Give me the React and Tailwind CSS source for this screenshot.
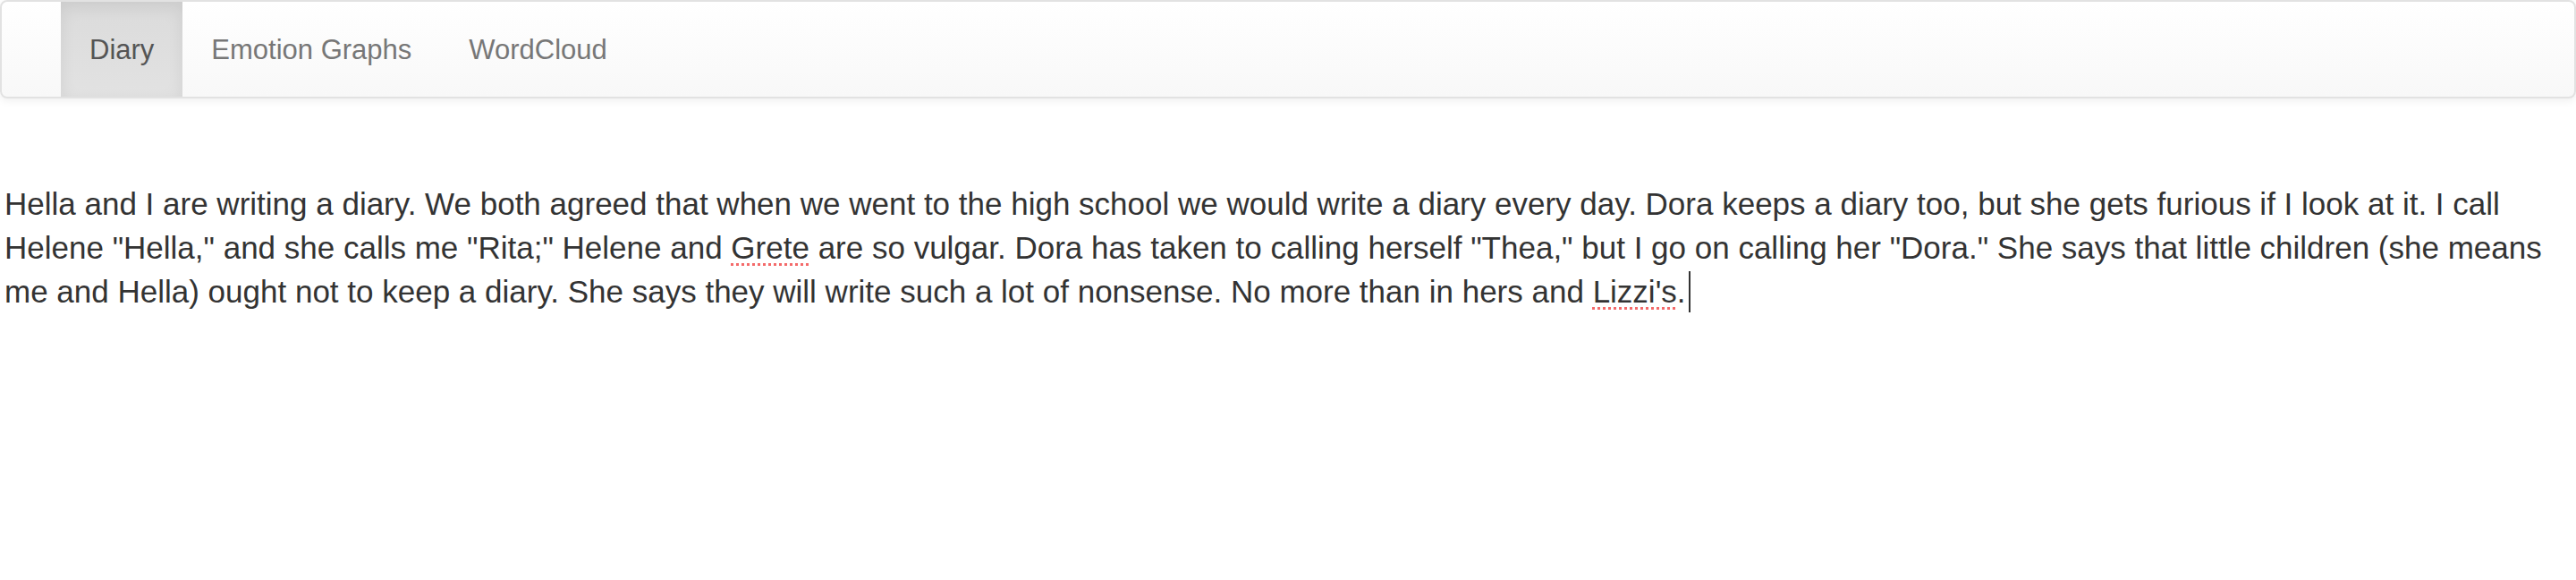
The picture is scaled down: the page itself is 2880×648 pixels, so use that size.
const TABS = ["Diary", "Emotion Graphs", "WordCloud"];

function Misspelled({ children }) {
  return (
    <span className="underline decoration-dotted decoration-[#f46a6a] decoration-[3px] underline-offset-[5px]">
      {children}
    </span>
  );
}

export default function App() {
  const active = "Diary";

  return (
    <div className="min-h-[648px] w-full bg-white font-['Liberation_Sans',Arial,sans-serif] text-[#333]">
      <nav className="flex h-[110px] w-full rounded-[8px] border-2 border-[#e2e2e2] bg-gradient-to-b from-white to-[#f8f8f8] pl-[66px] shadow-[0_2px_10px_rgba(0,0,0,0.075)]">
        <ul className="flex h-full">
          {TABS.map((tab) => (
            <li key={tab} className="h-full">
              <a
                href="#"
                className={
                  tab === active
                    ? "block h-full bg-gradient-to-b from-[#dbdbdb] to-[#e2e2e2] px-[32px] pt-[31px] text-[31px] leading-[46px] text-[#555] shadow-[inset_0_6px_18px_rgba(0,0,0,0.075)]"
                    : "block h-full px-[32px] pt-[31px] text-[31px] leading-[46px] text-[#777]"
                }
              >
                {tab}
              </a>
            </li>
          ))}
        </ul>
      </nav>

      <div className="mt-[93px] px-[5px] text-[35px] leading-[49px] whitespace-nowrap">
        Hella and I are writing a diary. We both agreed that when we went to the high school we would write a diary every
        day. Dora keeps a diary too, but she gets furious if I look at it. I call
        <br />
        Helene "Hella," and she calls me "Rita;" Helene and <Misspelled>Grete</Misspelled> are so vulgar. Dora has taken
        to calling herself "Thea," but I go on calling her "Dora." She says that little children (she means
        <br />
        me and Hella) ought not to keep a diary. She says they will write such a lot of nonsense. No more than in hers and{" "}
        <Misspelled>Lizzi's</Misspelled>.
        <span className="ml-[3px] inline-block h-[46px] w-[2px] bg-[#333] align-[-11px]" />
      </div>
    </div>
  );
}
